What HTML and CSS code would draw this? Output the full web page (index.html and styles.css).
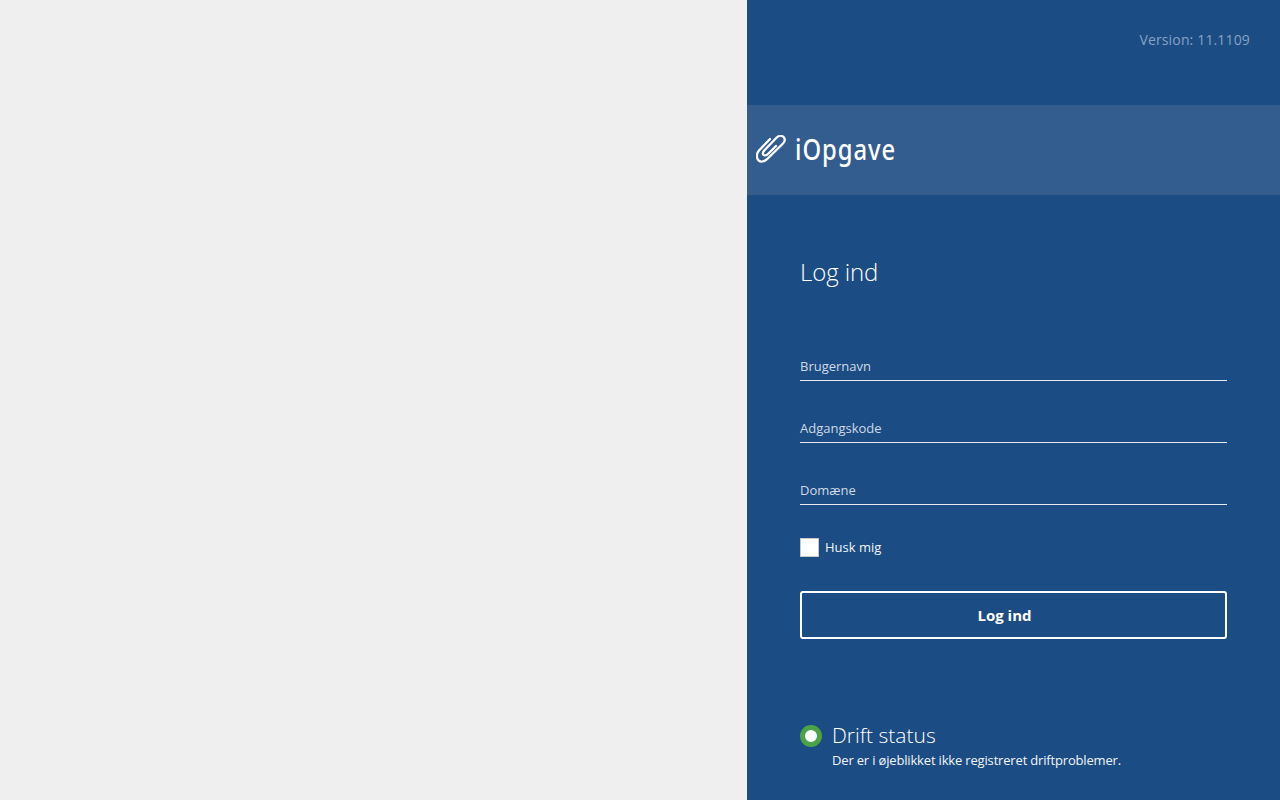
FILE: index.html
```html
<!DOCTYPE html>
<html lang="da">
<head>
<meta charset="utf-8">
<title>iOpgave</title>
<link rel="stylesheet" href="styles.css">
</head>
<body>
<div class="page">
  <div class="left"></div>
  <div class="panel">
    <div class="version">Version: 11.1109</div>
    <div class="brand">
      <svg class="clip" width="30" height="28" viewBox="0 0 30 28" fill="none" stroke="#fff" stroke-width="2.3" stroke-linecap="round" stroke-linejoin="round">
        <path d="M14 4 L3 15.5 C0 19 0.5 23.5 2.5 25.3 C5 27.5 8.5 26.5 11 24.2 L27 8.5 C29.3 6 29.3 3.5 27.5 1.9 C25.5 0.2 22.5 0.7 20.5 2.8 L8 15.8 C6.3 17.8 6.5 19.6 8 20.2 C9.5 20.8 11 20 12.5 18.5 L20 11"/>
      </svg>
      <span class="wordmark">iOpgave</span>
    </div>
    <form class="form">
      <h1 class="title">Log ind</h1>
      <div class="field first">Brugernavn</div>
      <div class="field">Adgangskode</div>
      <div class="field">Domæne</div>
      <label class="remember"><span class="box"></span><span class="remember-text">Husk mig</span></label>
      <div class="btn"><span>Log ind</span></div>
      <div class="status">
        <span class="dot"></span>
        <div class="status-text">
          <div class="status-title">Drift status</div>
          <div class="status-desc">Der er i øjeblikket ikke registreret driftproblemer.</div>
        </div>
      </div>
    </form>
  </div>
</div>
</body>
</html>
```

FILE: styles.css
```css
* { box-sizing: border-box; }
html, body { margin: 0; padding: 0; height: 100%; overflow: hidden; }
body { font-family: "Open Sans", "Noto Sans", sans-serif; background: #efefef; }
.page { display: flex; height: 800px; }
.left { flex: 0 0 747px; background: #efefef; }
.panel { flex: 1; background: #1b4c83; color: #fff; }
.version { height: 105px; padding: 30px 30px 0 0; text-align: right; font-size: 14px; line-height: 19px; letter-spacing: 0.15px; color: #86a2c4; }
.brand { height: 90px; background: #335c8f; display: flex; align-items: center; padding: 0 0 2px 9px; gap: 9px; }
.clip { display: block; }
.wordmark { font-family: "Noto Sans", sans-serif; font-size: 29px; line-height: 36px; font-weight: 500; letter-spacing: 1.2px; color: #fff; transform: scaleX(0.82); transform-origin: left center; }
.form { padding: 0 53px; }
.title { margin: 0; padding-top: 57px; font-size: 24px; line-height: 40px; font-weight: 300; letter-spacing: -0.1px; color: #fff; }
.field { height: 38px; margin-top: 24px; font-size: 13px; line-height: 18px; padding-top: 14px; color: #d0dae6; border-bottom: 1px solid #e6ebf1; }
.field.first { margin-top: 51px; }
.remember { display: flex; align-items: center; gap: 6px; margin-top: 33px; height: 19px; font-size: 13px; color: #f2f5f8; }
.remember-text { padding-bottom: 2px; }
.box { width: 19px; height: 19px; background: #fff; border: 1px solid #c8c8c8; }
.btn { margin-top: 34px; height: 48px; border: 2px solid #fff; border-radius: 3px; display: flex; align-items: center; justify-content: center; padding-right: 18px; font-size: 15px; font-weight: 700; color: #fff; }
.status { display: flex; gap: 10px; margin-top: 84px; }
.dot { width: 22px; height: 22px; margin-top: 2px; border-radius: 50%; background: #fff; border: 5px solid #4ba346; }
.status-title { font-size: 21px; line-height: 24px; font-weight: 300; color: #fff; }
.status-desc { font-size: 13px; line-height: 18px; margin-top: 4px; letter-spacing: -0.17px; color: #f2f5f8; }
```
